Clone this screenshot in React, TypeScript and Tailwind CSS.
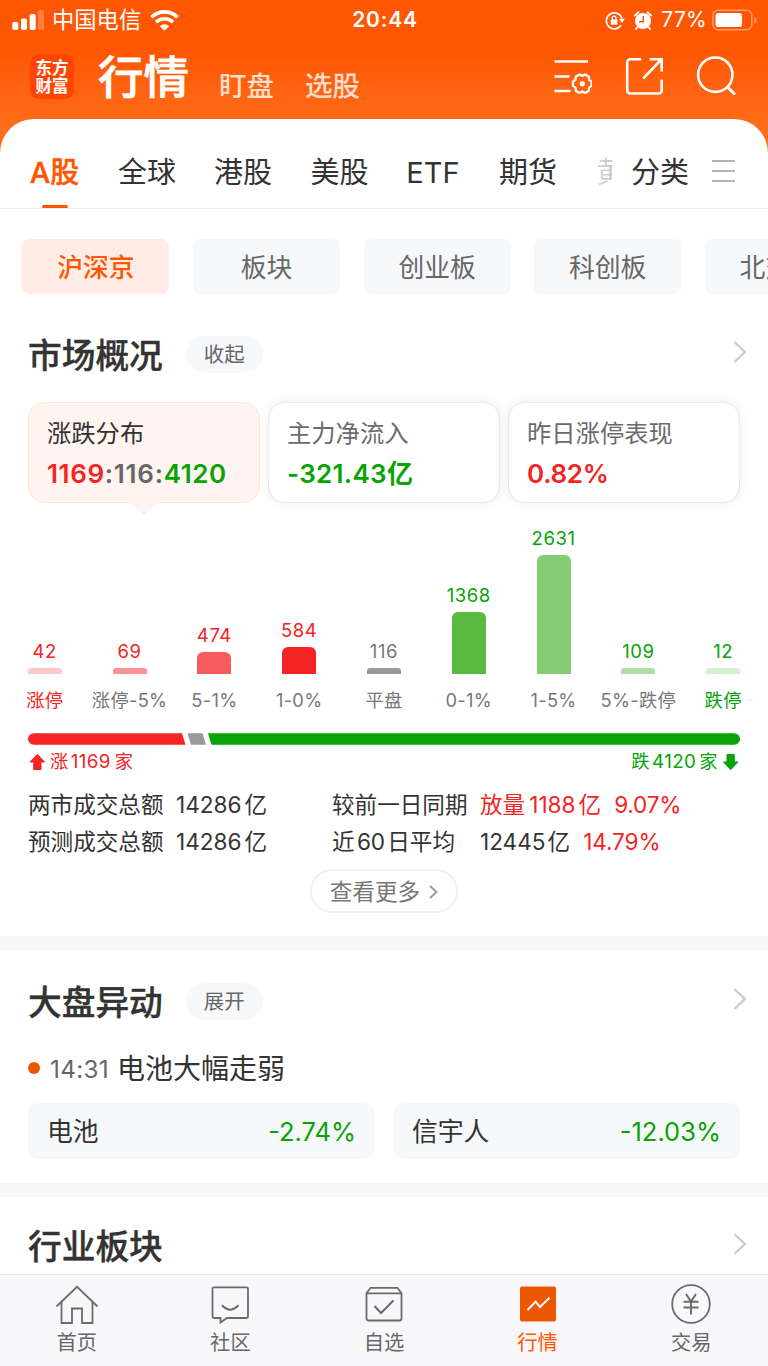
import { ReactNode } from "react"
import clsx from "clsx"

const tabs = [
    { name: "全球", width: "w-[96px]" },
    { name: "港股", width: "w-[96px]" },
    { name: "美股", width: "w-[97px]" },
    { name: "ETF", width: "w-[90px]" },
    { name: "期货", width: "w-[100px]" },
]

const boards = ["沪深京", "板块", "创业板", "科创板", "北交所"]

const bars = [
    { value: 42, label: "涨停", height: 6, bar: "bg-[#fcc8c8]", text: "text-[#f42424]", labelText: "text-[#f42424]" },
    { value: 69, label: "涨停-5%", height: 6, bar: "bg-[#fa9192]", text: "text-[#f42424]", labelText: "text-[#777]" },
    { value: 474, label: "5-1%", height: 22, bar: "bg-[#f75b5d]", text: "text-[#f42424]", labelText: "text-[#777]" },
    { value: 584, label: "1-0%", height: 27, bar: "bg-[#f42424]", text: "text-[#f42424]", labelText: "text-[#777]" },
    { value: 116, label: "平盘", height: 6, bar: "bg-[#999]", text: "text-[#777]", labelText: "text-[#777]" },
    { value: 1368, label: "0-1%", height: 62, bar: "bg-[#5bb942]", text: "text-[#07a307]", labelText: "text-[#777]" },
    { value: 2631, label: "1-5%", height: 119, bar: "bg-[#84cd74]", text: "text-[#07a307]", labelText: "text-[#777]" },
    { value: 109, label: "5%-跌停", height: 6, bar: "bg-[#addea2]", text: "text-[#07a307]", labelText: "text-[#777]" },
    { value: 12, label: "跌停", height: 6, bar: "bg-[#d6efd1]", text: "text-[#07a307]", labelText: "text-[#07a307]" },
]

function StatusBar() {
    return (
        <div className="flex h-10 items-center pr-[10px] pl-2">
            <div className="flex flex-1 items-center pl-1">
                <svg width="32" height="20" viewBox="0 0 32 20" fill="#fff">
                    <rect x="0.3" y="12" width="6" height="8" rx="1.8" />
                    <rect x="9" y="8.5" width="6" height="11.5" rx="1.8" />
                    <rect x="17.7" y="4" width="6" height="16" rx="1.8" />
                    <rect x="26" y="0" width="6" height="20" rx="1.8" opacity="0.25" />
                </svg>
                <span className="ml-2 text-[22.3px]">中国电信</span>
                <svg className="ml-[9px]" width="29" height="21" viewBox="0 0 29 21" fill="none" stroke="#fff">
                    <path d="M1.5 7.2a18.5 18.5 0 0 1 26 0" strokeWidth="3.6" />
                    <path d="M6 12.3a12 12 0 0 1 17 0" strokeWidth="3.6" />
                    <path d="M9.8 16.2a6.8 6.8 0 0 1 9.4 0l-4.7 4.6z" fill="#fff" stroke="none" />
                </svg>
            </div>
            <span className="text-[21px] font-semibold tracking-[0.8px]">20:44</span>
            <div className="flex flex-1 items-center justify-end">
                <svg width="20" height="19" viewBox="0 0 20 19" fill="none" stroke="#fff" strokeWidth="1.7">
                    <path d="M16 14.3A8 8 0 1 1 17 7.5" />
                    <path d="M13.8 7.8h6l-2.8 4.2z" fill="#fff" stroke="none" />
                    <rect x="5.8" y="8.5" width="6.6" height="5.3" rx="0.8" fill="#fff" stroke="none" />
                    <path d="M7.2 9V7a1.9 1.9 0 0 1 3.8 0v2" strokeWidth="1.3" />
                </svg>
                <svg className="ml-[9px]" width="18" height="19" viewBox="0 0 18 19">
                    <circle cx="9" cy="10" r="8" fill="#fff" />
                    <path d="M1 4.5l3.5-3.2M17 4.5l-3.5-3.2M3.5 16l-1.5 2M14.5 16l1.5 2" stroke="#fff" strokeWidth="2" strokeLinecap="round" />
                    <path d="M9.3 5v5.8H5" stroke="#ff5602" strokeWidth="1.5" fill="none" />
                </svg>
                <span className="ml-[9px] text-[21px] tracking-[0.3px]">77%</span>
                <svg className="ml-[5px]" width="46" height="22" viewBox="0 0 46 22">
                    <rect x="0.8" y="1.3" width="39" height="19.4" rx="5" fill="none" stroke="#fff" strokeOpacity="0.4" strokeWidth="1.5" />
                    <rect x="3.5" y="4" width="26.5" height="14" rx="2.5" fill="#fff" />
                    <path d="M42.3 8c3 1 3 6 0 7z" fill="#fff" fillOpacity="0.45" />
                </svg>
            </div>
        </div>
    )
}

function Header() {
    return (
        <div className="flex h-[79px] pl-[30px] pr-8">
            <div className="mt-[14px] flex h-[45px] w-11 flex-col items-center justify-center rounded-[9px] bg-[#ff4503] text-[16.5px] leading-[18px] font-bold">
                <span>东方</span>
                <span>财富</span>
            </div>
            <h1 className="ml-[24px] mt-[8px] w-[92px] text-[45.5px] leading-[60px] font-medium [-webkit-text-stroke:0.7px]">行情</h1>
            <span className="ml-[29px] mt-[26px] w-[56px] text-[27.5px] leading-10 font-medium text-[#ffddcb]">盯盘</span>
            <span className="ml-[30px] mt-[26px] w-[56px] text-[27.5px] leading-10 font-medium text-[#ffddcb]">选股</span>
            <div className="mt-4 ml-auto flex h-10 items-center gap-8">
                <svg width="44" height="40" viewBox="0 0 44 40" fill="none" stroke="#fff" strokeWidth="2.6">
                    <path d="M6.5 5.5H40M6.5 20.500h15M6.500 35h16" />
                    <g transform="translate(34.3 27.7)">
                        <path d="M9.350-2.160V2.160L6.750 3.900 6.550 7.020 2.810 9.180 0 7.800-2.810 9.180-6.550 7.020-6.750 3.900-9.350 2.160V-2.160L-6.750-3.900-6.550-7.020-2.810-9.180 0-7.800 2.810-9.180 6.550-7.020 6.750-3.900z" strokeWidth="2.3" strokeLinejoin="round" />
                        <circle r="2.6" fill="#fff" stroke="none" />
                    </g>
                </svg>
                <svg width="40" height="40" viewBox="0 0 40 40" fill="none" stroke="#fff" strokeWidth="2.6">
                    <path d="M17.2 3.2H6.200a3 3 0 0 0-3 3V34.500a3 3 0 0 0 3 3H34.700a3 3 0 0 0 3-3V23.500" />
                    <path d="M25.700 3.200h12v12.300M37.700 3.200L19.200 22.500" />
                </svg>
                <svg width="40" height="40" viewBox="0 0 40 40" fill="none" stroke="#fff" strokeWidth="2.6">
                    <circle cx="19.3" cy="18.700" r="17.2" />
                    <path d="M31 30.500l8 8" strokeWidth="3" />
                </svg>
            </div>
        </div>
    )
}

function MarketTabs() {
    return (
        <div className="flex h-[90px] border-b border-[#ececee] pl-[30px] text-[29px] leading-[42px] whitespace-nowrap text-[#333]">
            <div className="mt-[32.5px] flex w-[49px] flex-col items-center font-medium text-[#ff5602]">
                <span className="[-webkit-text-stroke:0.4px]">A股</span>
                <div className="mt-[11px] h-1 w-[26px] rounded-full bg-[#ff5602]" />
            </div>
            <div className="ml-[20px] mt-[32.5px] flex">
                {tabs.map((tab) => (
                    <span key={tab.name} className={clsx("text-center", tab.width)}>{tab.name}</span>
                ))}
            </div>
            <span className="ml-[18px] mt-[32.5px] w-[16px] overflow-hidden bg-linear-to-r from-[#ddd] to-[#c4c4c4] bg-clip-text text-transparent">黄</span>
            <span className="ml-[19px] mt-[32.5px]">分类</span>
            <div className="ml-[22.5px] mt-[40.5px] flex flex-col gap-[7.5px]">
                <div className="h-[2.5px] w-[23px] bg-[#b3b3b3]" />
                <div className="h-[2.5px] w-[23px] bg-[#b3b3b3]" />
                <div className="h-[2.5px] w-[23px] bg-[#b3b3b3]" />
            </div>
        </div>
    )
}

function BoardChips() {
    return (
        <div className="flex gap-[23.6px] overflow-hidden pt-[30px] pl-[22.4px]">
            {boards.map((board, i) => (
                <div
                    key={board}
                    className={clsx(
                        "flex h-[55px] w-[147px] shrink-0 items-center justify-center rounded-[7px] pt-[3px] text-[25.8px]",
                        i === 0 ? "bg-[#ffede5] font-medium text-[#ff5602]" : "bg-[#f7f8fa] text-[#666]"
                    )}
                >
                    {board}
                </div>
            ))}
        </div>
    )
}

function Chevron() {
    return (
        <svg className="mb-[5px] ml-auto" width="14" height="24" viewBox="0 0 14 24" fill="none" stroke="#ccc" strokeWidth="2.4">
            <path d="M1.5 2l10.3 10L1.5 22" />
        </svg>
    )
}

function SectionTitle({ title, action }: { title: string, action?: string }) {
    return (
        <div className="flex h-[50px] items-center pr-[21px] pl-[28px]">
            <h2 className="pt-px text-[33.7px] leading-[49px] font-medium text-[#333] [-webkit-text-stroke:0.4px]">{title}</h2>
            {action && (
                <span className="ml-[23px] flex h-[37px] w-[77px] items-center justify-center rounded-full bg-[#f7f8fa] pt-[2px] text-[20.5px] text-[#666]">{action}</span>
            )}
            <Chevron />
        </div>
    )
}

function SummaryCard({ title, active, children }: { title: string, active?: boolean, children: ReactNode }) {
    return (
        <div
            className={clsx(
                "relative h-[101px] flex-1 rounded-[17px] border pl-[18px] whitespace-nowrap",
                active ? "border-[#ffe5d9] bg-[#fff4ef] text-[#333]" : "border-[#e8e8e8] bg-white text-[#6b6b6b] shadow-[0_0_10px_rgba(0,0,0,0.08)]"
            )}
        >
            <p className="mt-[12px] text-[24.3px] leading-9">{title}</p>
            <p className="mt-[5px] flex text-[26px] leading-9 font-semibold">{children}</p>
            {active && (
                <svg className="absolute top-[99px] left-[101px]" width="28" height="13" viewBox="0 0 28 13" fill="#fff4ef">
                    <path d="M0 1C3 1 4 3 12 10q2 1.6 4 0C24 3 25 1 28 1V0H0z" />
                    <path d="M0 1C3 1 4 3 12 10q2 1.6 4 0C24 3 25 1 28 1" fill="none" stroke="#ffe5d9" />
                </svg>
            )}
        </div>
    )
}

function DistributionChart() {
    return (
        <div className="flex h-[211px] px-[2.4px]">
            {bars.map((bar) => (
                <div key={bar.label} className="flex w-0 flex-1 flex-col items-center justify-end whitespace-nowrap">
                    <span className={clsx("text-[18.5px] leading-6 tracking-[0.6px]", bar.text)}>{bar.value}</span>
                    <div className={clsx("mt-[5px] w-[34px]", bar.height > 6 ? "rounded-t-[6px]" : "rounded-t-[3px]", bar.bar)} style={{ height: bar.height }} />
                    <span className={clsx("mt-[13px] text-[18.3px] leading-[27px] tracking-[0.3px]", bar.labelText)}>{bar.label}</span>
                </div>
            ))}
        </div>
    )
}

function RatioBar() {
    return (
        <div className="px-7">
            <svg className="block" width="712" height="12" viewBox="0 0 712 12">
                <path d="M5.7 0.3H154L157.5 11.7H5.7a5.7 5.7 0 0 1 0-11.4z" fill="#f42424" />
                <path d="M159.5 0.3H174.5L178 11.7H163z" fill="#999" />
                <path d="M180 0.3H706.3a5.7 5.7 0 0 1 0 11.4H183.5z" fill="#07a307" />
            </svg>
            <div className="mt-[3px] flex h-7 items-center text-[18.3px] tracking-[0.4px]">
                <svg width="18" height="18" viewBox="0 0 18 18" fill="#f42424" stroke="#f42424" strokeLinejoin="round">
                    <path d="M9.3 1.3L16.5 9H13V16.500H5.700V9H2z" />
                </svg>
                <span className="ml-[4px] text-[#f42424]">涨</span>
                <span className="ml-[2px] text-[18.8px] text-[#f42424]">1169</span>
                <span className="ml-[4px] text-[#f42424]">家</span>
                <span className="ml-auto text-[#07a307]">跌</span>
                <span className="ml-[2px] text-[18.8px] text-[#07a307]">4120</span>
                <span className="ml-[3px] text-[#07a307]">家</span>
                <svg className="ml-[4px]" width="18" height="18" viewBox="0 0 18 18" fill="#07a307" stroke="#07a307" strokeLinejoin="round">
                    <path d="M8.700 16.700L16 9H12.300V1.500H5V9H1.500z" />
                </svg>
            </div>
        </div>
    )
}

function Turnover() {
    return (
        <div className="grid grid-cols-[148px_156px_148px_1fr] pt-[10px] pb-px pl-7 text-[22.6px] leading-[37px] whitespace-nowrap text-[#333]">
            <span>两市成交总额</span>
            <span className="flex gap-[3px]">14286<span>亿</span></span>
            <span>较前一日同期</span>
            <span className="flex text-[#f42424]">放量<span className="ml-[4px] mr-[3px]">1188</span>亿<span className="ml-[13px] tracking-[-0.2px]">9.07%</span></span>
            <span>预测成交总额</span>
            <span className="flex gap-[3px]">14286<span>亿</span></span>
            <span className="flex">近<span className="mx-[2.5px] tracking-[-0.3px]">60</span>日平均</span>
            <span className="flex"><span className="mr-[2px]">12445</span>亿<span className="ml-[13px] tracking-[-0.1px] text-[#f42424]">14.79%</span></span>
        </div>
    )
}

function ChangeItem({ name, change }: { name: string, change: string }) {
    return (
        <div className="flex h-[56px] flex-1 items-center justify-between rounded-[10px] bg-[#f7f8fa] px-[19px] text-[25.5px]">
            <span className="pt-[3px] text-[25.8px] text-[#333]">{name}</span>
            <span className="pt-[2px] text-[#07a307]">{change}</span>
        </div>
    )
}

function NavItem({ label, active, children }: { label: string, active?: boolean, children: ReactNode }) {
    return (
        <div className={clsx("flex flex-1 flex-col items-center pt-[8px] text-[20.3px] leading-7", active ? "text-[#ff5602]" : "text-[#666]")}>
            <svg width="44" height="44" viewBox="0 0 44 44" fill="none" stroke="#6b6b6b" strokeWidth="1.8">{children}</svg>
            <span className="mt-[2px]">{label}</span>
        </div>
    )
}

function BottomNav() {
    return (
        <div className="flex h-[92px] border-t border-[#e7e7ee] bg-[#f8f8fb]">
            <NavItem label="首页">
                <path d="M1.5 23.5L22 3.8 42.5 23.5" />
                <path d="M6.5 19V40H17V25.5H27V40H37.5V19" />
            </NavItem>
            <NavItem label="社区">
                <path d="M6 4.3H38.5a1.5 1.5 0 0 1 1.5 1.5V33.5a1.5 1.5 0 0 1-1.5 1.5H19L12.5 39.5V35H6a1.5 1.5 0 0 1-1.5-1.5V5.8a1.5 1.5 0 0 1 1.5-1.5z" />
                <path d="M14 22.3q8.2 8.8 16.5 0" strokeWidth="2" />
            </NavItem>
            <NavItem label="自选">
                <path d="M4.5 10.3L8.5 4.800H35.500L39.500 10.300V35.500a2 2 0 0 1-2 2h-31a2 2 0 0 1-2-2zH39.500" />
                <path d="M12.5 23l6.5 7L31.5 17.5" strokeWidth="2" />
            </NavItem>
            <NavItem label="行情" active>
                <rect x="4" y="3.5" width="36" height="35" rx="2" fill="#ee5702" stroke="none" />
                <path d="M11.5 27l8-8.3 4.5 5.3 9.5-9.3" stroke="#fff" strokeWidth="2" />
            </NavItem>
            <NavItem label="交易">
                <circle cx="22" cy="21" r="18.8" />
                <path d="M17 11l5 7.5L27 11M22 18.500V31.500M14.500 18.700h15M14.500 24.500h15" strokeWidth="2" />
            </NavItem>
        </div>
    )
}

export default function App() {
    return (
        <div className="flex h-[1366px] w-[768px] flex-col overflow-hidden bg-white font-['Inter','Noto_Sans_CJK_SC',sans-serif]">
            <div className="h-[160px] shrink-0 bg-linear-to-b from-[#ff5602] from-30% to-[#ff6d1a] to-80% text-white">
                <StatusBar />
                <Header />
            </div>
            <div className="-mt-[41px] flex min-h-0 flex-1 flex-col rounded-t-[34px] bg-white">
                <MarketTabs />
                <BoardChips />

                <div className="mt-[35.5px]">
                    <SectionTitle title="市场概况" action="收起" />
                    <div className="mt-[22.5px] flex gap-2 px-7">
                        <SummaryCard title="涨跌分布" active>
                            <span className="tracking-[0.6px] text-[#f42424]">1169</span>
                            <span className="tracking-[0.8px] text-[#666]">:116:</span>
                            <span className="tracking-[0.5px] text-[#07a307]">4120</span>
                        </SummaryCard>
                        <SummaryCard title="主力净流入">
                            <span className="tracking-[0.3px] text-[#07a307]">-321.43亿</span>
                        </SummaryCard>
                        <SummaryCard title="昨日涨停表现">
                            <span className="tracking-[-0.3px] text-[#f42424]">0.82%</span>
                        </SummaryCard>
                    </div>
                    <DistributionChart />
                    <div className="h-[19px]" />
                    <RatioBar />
                    <Turnover />
                    <div className="mt-[8px] flex justify-center">
                        <button className="flex h-[44px] w-[148px] items-center justify-center gap-[9px] rounded-full border-2 border-[#f0f0f0] pt-px text-[22.6px] text-[#777]">
                            查看更多
                            <svg width="9" height="14" viewBox="0 0 9 14" fill="none" stroke="#999" strokeWidth="1.8">
                                <path d="M1 1l6.5 6L1 13" />
                            </svg>
                        </button>
                    </div>
                </div>
                <div className="mt-[23px] h-[14px] shrink-0 bg-[#f7f8fa]" />

                <div className="mt-[26.5px]">
                    <SectionTitle title="大盘异动" action="展开" />
                    <div className="mt-[20.5px] flex h-[42px] items-center pl-7">
                        <div className="h-3 w-3 rounded-full bg-[#ee5702]" />
                        <span className="ml-[10px] w-[67px] pt-[2px] text-[24.3px] tracking-[0.3px] text-[#666]">14:31</span>
                        <span className="pt-[2px] text-[28px] text-[#333]">电池大幅走弱</span>
                    </div>
                    <div className="mt-[14px] flex gap-[18px] px-7">
                        <ChangeItem name="电池" change="-2.74%" />
                        <ChangeItem name="信宇人" change="-12.03%" />
                    </div>
                </div>
                <div className="mt-[24px] h-[14px] shrink-0 bg-[#f7f8fa]" />

                <div className="mt-[24px]">
                    <SectionTitle title="行业板块" />
                </div>
                <div className="mt-auto">
                    <BottomNav />
                </div>
            </div>
        </div>
    )
}
